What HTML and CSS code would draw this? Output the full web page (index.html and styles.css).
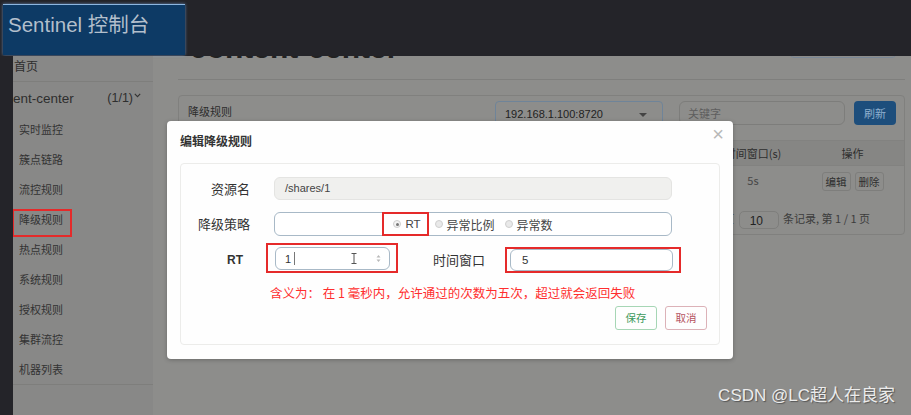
FILE: index.html
```html
<!DOCTYPE html>
<html lang="zh-CN">
<head>
<meta charset="utf-8">
<title>Sentinel 控制台</title>
<link rel="stylesheet" href="styles.css">
</head>
<body>
<div class="app">
  <header class="topbar">
    <div class="brand">Sentinel 控制台</div>
  </header>
  <div class="layout">
    <div class="rail"></div>
    <nav class="sidebar">
      <div class="nav-home">首页</div>
      <div class="nav-app"><span class="app-name">ent-center</span><span class="app-count">(1/1)<svg class="caret" width="7" height="5" viewBox="0 0 7 5"><path d="M0.8 0.8L3.5 3.6L6.2 0.8" stroke="#333" stroke-width="1.1" fill="none"/></svg></span></div>
      <ul class="nav-list">
        <li>实时监控</li>
        <li>簇点链路</li>
        <li>流控规则</li>
        <li><span class="annot">降级规则</span></li>
        <li>热点规则</li>
        <li>系统规则</li>
        <li>授权规则</li>
        <li>集群流控</li>
        <li>机器列表</li>
      </ul>
    </nav>
    <main class="main">
      <div class="page-head">
        <div class="page-head-inner">
          <h1 class="page-title">content-center</h1>
          <div class="head-btn"></div>
        </div>
      </div>
      <div class="panel">
        <div class="panel-head">
          <div class="panel-title">降级规则</div>
          <div class="select">192.168.1.100:8720<span class="select-caret"></span></div>
          <div class="search">关键字</div>
          <div class="btn-primary">刷新</div>
        </div>
        <div class="table">
          <div class="thead">
            <div class="cell"></div>
            <div class="cell">时间窗口(s)</div>
            <div class="cell">操作</div>
          </div>
          <div class="trow">
            <div class="cell"></div>
            <div class="cell light">5s</div>
            <div class="cell ops"><span class="btn-sm">编辑</span><span class="btn-sm">删除</span></div>
          </div>
        </div>
        <div class="pager">页 <span class="pager-input">10</span> 条记录, 第 1 / 1 页</div>
      </div>
    </main>
  </div>

  <div class="modal">
    <div class="modal-head">
      <div class="modal-title">编辑降级规则</div>
      <div class="modal-close">×</div>
    </div>
    <div class="modal-body">
      <div class="form-row">
        <label class="form-label">资源名</label>
        <div class="field field-disabled">/shares/1</div>
      </div>
      <div class="form-row">
        <label class="form-label">降级策略</label>
        <div class="field radio-group">
          <span class="radio-mark"><span class="radio checked"></span>RT</span>
          <span class="radio-opt"><span class="radio"></span>异常比例</span>
          <span class="radio-opt"><span class="radio"></span>异常数</span>
        </div>
      </div>
      <div class="form-row row-pair">
        <label class="form-label label-rt">RT</label>
        <div class="mark-box mark-rt">
          <div class="field num-field">
            <span class="num-val">1</span><span class="caret-line"></span>
            <svg class="ibeam" width="6" height="11" viewBox="0 0 6 11"><path d="M0.5 0.5h5M3 0.5v10M0.5 10.5h5" stroke="#555" stroke-width="1" fill="none"/></svg>
            <svg class="spin" width="5" height="9" viewBox="0 0 5 9"><path d="M2.5 1L4.5 3.5H0.5Z M2.5 8L4.5 5.5H0.5Z" fill="#b9b9b9"/></svg>
          </div>
        </div>
        <label class="form-label label-win">时间窗口</label>
        <div class="mark-box mark-win">
          <div class="field win-field">5</div>
        </div>
      </div>
      <div class="hint">含义为： 在 1 毫秒内，允许通过的次数为五次，超过就会返回失败</div>
      <div class="actions">
        <span class="btn-save">保存</span>
        <span class="btn-cancel">取消</span>
      </div>
    </div>
  </div>

  <div class="watermark">CSDN @LC超人在良家</div>
</div>
</body>
</html>
```
FILE: styles.css
```css
* { box-sizing: border-box; }
html, body { margin: 0; padding: 0; }
body {
  width: 911px;
  height: 415px;
  overflow: hidden;
  background: #8d8d8b;
  font-family: "Liberation Sans", "Noto Sans CJK SC", sans-serif;
  color: #2c2c2c;
}
.app {
  position: relative;
  width: 911px;
  height: 415px;
  display: flex;
  flex-direction: column;
}

/* top bar */
.topbar {
  height: 56px;
  flex: none;
  background: #242429;
  padding: 4px 0 0 3px;
}
.brand {
  width: 182px;
  height: 51px;
  background: #0d3a65;
  border-top: 1px solid #8db6df;
  box-shadow: 0 0 3px rgba(120, 170, 230, 0.7);
  color: #b3bfcc;
  font-size: 20.5px;
  line-height: 40px;
  padding-left: 5px;
}

.layout {
  flex: 1;
  display: flex;
  min-height: 0;
}
.rail {
  width: 13px;
  flex: none;
  background: #242429;
}

/* sidebar */
.sidebar {
  width: 140px;
  flex: none;
  background: #888887;
  overflow: hidden;
  font-family: "Noto Sans CJK SC", sans-serif;
}
.nav-home {
  height: 26px;
  line-height: 20px;
  font-size: 12px;
  padding-left: 1px;
  border-bottom: 1px solid #7e7e7c;
  color: #2e2e2e;
}
.nav-app {
  height: 32px;
  display: flex;
  align-items: center;
  justify-content: space-between;
  padding-right: 12px;
  font-family: "Liberation Sans", sans-serif;
  font-size: 13.5px;
  color: #2e2e2e;
}
.app-count { font-size: 12.5px; display: flex; align-items: center; }
.caret { margin-left: 1px; margin-top: -6px; }
.nav-list {
  list-style: none;
  margin: 0;
  padding: 0;
  border-bottom: 1px solid #7e7e7c;
}
.nav-list li {
  height: 30px;
  display: flex;
  align-items: center;
  padding-left: 6px;
  font-size: 11px;
  color: #333;
}
.annot { position: relative; }
.annot::after {
  content: "";
  position: absolute;
  left: -7px;
  right: -9px;
  top: -2px;
  bottom: -10px;
  border: 2px solid #e52a2a;
}

/* main */
.main {
  flex: 1;
  padding: 0 6px 0 25px;
  min-width: 0;
}
.page-head {
  height: 24px;
  overflow: hidden;
  border-bottom: 1px solid #7f7f7d;
}
.page-head-inner {
  margin-top: -28px;
  height: 40px;
  display: flex;
  justify-content: space-between;
  align-items: flex-start;
}
.page-title {
  margin: 0 0 0 12px;
  font-size: 30px;
  line-height: 40px;
  font-weight: bold;
  color: #222;
}
.head-btn {
  width: 106px;
  height: 30px;
  border: 1px solid #7a8796;
  border-radius: 4px;
  margin: 0 9px 0 0;
}
.panel {
  margin-top: 15px;
  height: 140px;
  border: 1px solid #80807e;
  border-radius: 4px;
}
.panel-head {
  display: flex;
  align-items: flex-start;
  padding: 5px 8px 0 9px;
  height: 44px;
}
.panel-title {
  font-family: "Noto Sans CJK SC", sans-serif;
  font-size: 11px;
  line-height: 16px;
  margin-top: 2px;
  color: #2c2c2c;
  flex: 1;
}
.select {
  width: 168px;
  height: 24px;
  border: 1px solid #6f8499;
  border-radius: 4px;
  font-size: 11px;
  line-height: 24px;
  padding-left: 9px;
  color: #222;
  position: relative;
}
.select-caret {
  position: absolute;
  right: 15px;
  top: 11px;
  border-left: 4px solid transparent;
  border-right: 4px solid transparent;
  border-top: 4px solid #444;
}
.search {
  width: 166px;
  height: 24px;
  margin-left: 16px;
  border: 1px solid #7d7d7b;
  border-radius: 6px;
  font-family: "Noto Sans CJK SC", sans-serif;
  font-size: 11px;
  line-height: 22px;
  padding-left: 8px;
  color: #5e5e5e;
}
.btn-primary {
  width: 42px;
  height: 24px;
  margin-left: 9px;
  background: #1d4e7c;
  border-radius: 4px;
  color: #8fb0cf;
  font-family: "Noto Sans CJK SC", sans-serif;
  font-size: 11px;
  line-height: 24px;
  text-align: center;
}
.table { font-family: "Noto Sans CJK SC", sans-serif; font-size: 11px; }
.thead, .trow {
  display: grid;
  grid-template-columns: 1fr 96px 103px;
}
.thead {
  height: 26px;
  background: #868684;
  border-top: 1px solid #828280;
  border-bottom: 1px solid #828280;
}
.thead .cell {
  line-height: 25px;
  text-align: center;
  color: #2e2e2e;
}
.trow { height: 34px; }
.trow .cell { text-align: center; }
.light { color: #474747; padding-top: 7px; line-height: 14px; }
.ops { display: flex; justify-content: center; gap: 4px; padding-top: 6px; }
.btn-sm {
  display: inline-block;
  height: 19px;
  padding: 0 3px;
  border: 1px solid #7e7e7c;
  border-radius: 3px;
  line-height: 17px;
  font-size: 10.5px;
  color: #2e2e2e;
}
.pager {
  text-align: right;
  padding-right: 34px;
  font-family: "Noto Sans CJK SC", sans-serif;
  font-size: 11px;
  color: #3c3c3c;
  line-height: 18px;
  margin-top: 9px;
}
.pager-input {
  display: inline-block;
  width: 40px;
  height: 18px;
  border: 1px solid #7e7e7c;
  border-radius: 5px;
  text-align: left;
  padding-left: 10px;
  font-family: "Liberation Sans", sans-serif;
  font-size: 12px;
  color: #222;
  margin: 0 2px;
  vertical-align: middle;
}

/* modal */
.modal {
  position: absolute;
  left: 167px;
  top: 121px;
  width: 566px;
  height: 238px;
  background: #fefefe;
  border-radius: 4px;
  box-shadow: 0 1px 4px rgba(0, 0, 0, 0.25);
  font-family: "Noto Sans CJK SC", sans-serif;
}
.modal-head {
  height: 42px;
  display: flex;
  justify-content: space-between;
  padding: 0 9px 0 13px;
}
.modal-title {
  font-size: 12px;
  font-weight: bold;
  line-height: 16px;
  margin-top: 12px;
  color: #333;
}
.modal-close {
  font-family: "Liberation Sans", sans-serif;
  font-size: 20px;
  line-height: 20px;
  margin-top: 3px;
  color: #b8b8b8;
}
.modal-body {
  margin: 0 13px;
  height: 182px;
  border: 1px solid #ececea;
  border-radius: 4px;
  padding-top: 13px;
}
.form-row {
  display: flex;
  align-items: center;
  margin-bottom: 12px;
}
.form-label {
  width: 69px;
  text-align: right;
  font-size: 13px;
  line-height: 16px;
  color: #333;
  flex: none;
}
.field {
  margin-left: 24px;
  width: 398px;
  height: 23px;
  border-radius: 6px;
  border: 1px solid #a8b9c7;
  background: #fff;
}
.field-disabled {
  background: #f0f0ee;
  border-color: #e4e4e2;
  font-family: "Liberation Sans", sans-serif;
  font-size: 11px;
  line-height: 21px;
  padding-left: 10px;
  color: #444;
}
.radio-group {
  height: 24px;
  display: flex;
  align-items: center;
  justify-content: center;
  padding-right: 11px;
  font-size: 12px;
  color: #444;
}
.radio {
  display: inline-block;
  width: 8px;
  height: 8px;
  border-radius: 50%;
  border: 1px solid #cfcfcf;
  background: #e9e9e9;
  margin-right: 4px;
  position: relative;
}
.radio.checked { background: #f4f4f4; }
.radio.checked::after {
  content: "";
  position: absolute;
  left: 1.5px;
  top: 1.5px;
  width: 3px;
  height: 3px;
  border-radius: 50%;
  background: #777;
}
.radio-mark {
  display: flex;
  align-items: center;
  height: 24px;
  margin: -1px 0;
  padding: 0 6px 0 9px;
  border: 2px solid #e52a2a;
  font-family: "Liberation Sans", sans-serif;
  font-size: 11.5px;
}
.radio-opt {
  display: flex;
  align-items: center;
  margin-left: 6px;
}
.radio-opt + .radio-opt { margin-left: 10px; }

.row-pair {
  align-items: flex-end;
  margin-top: -5px;
  margin-bottom: 0;
}
.label-rt {
  width: 62px;
  font-family: "Liberation Sans", sans-serif;
  font-weight: bold;
  font-size: 12px;
  margin-bottom: 5px;
}
.label-win {
  width: auto;
  margin-left: 35px;
  margin-bottom: 5px;
}
.mark-box { border: 2px solid #e52a2a; }
.mark-rt {
  margin-left: 23px;
  padding: 2px 6px 1px 7px;
}
.mark-win {
  margin-left: 20px;
  padding: 0 6px 0 3px;
}
.mark-box .field { margin-left: 0; }
.num-field {
  width: 115px;
  display: flex;
  align-items: center;
  padding-left: 9px;
  font-family: "Liberation Sans", sans-serif;
  font-size: 11px;
  color: #333;
}
.caret-line {
  width: 1px;
  height: 13px;
  background: #777;
  margin-left: 3px;
}
.ibeam { margin-left: 56px; }
.spin { margin-left: 19px; }
.win-field {
  width: 163px;
  height: 22px;
  font-family: "Liberation Sans", sans-serif;
  font-size: 11.5px;
  line-height: 20px;
  padding-left: 11px;
  color: #333;
}
.hint {
  margin-top: 12px;
  padding-left: 89px;
  font-size: 12.5px;
  line-height: 16px;
  color: #ff2e2e;
}
.actions {
  display: flex;
  justify-content: flex-end;
  gap: 8px;
  padding-right: 12px;
  margin-top: 5px;
}
.btn-save, .btn-cancel {
  width: 42px;
  height: 24px;
  border-radius: 3px;
  text-align: center;
  font-size: 10.5px;
  line-height: 22px;
}
.btn-save { border: 1px solid #a6d6b5; color: #3d9a5c; }
.btn-cancel { border: 1px solid #dcb2b8; color: #b5525f; }

.watermark {
  position: absolute;
  right: 16px;
  bottom: 9px;
  font-family: "Liberation Sans", "Noto Sans CJK SC", sans-serif;
  font-size: 17px;
  line-height: 20px;
  color: #ececec;
  text-shadow: 1px 1px 1px #555;
}
```
